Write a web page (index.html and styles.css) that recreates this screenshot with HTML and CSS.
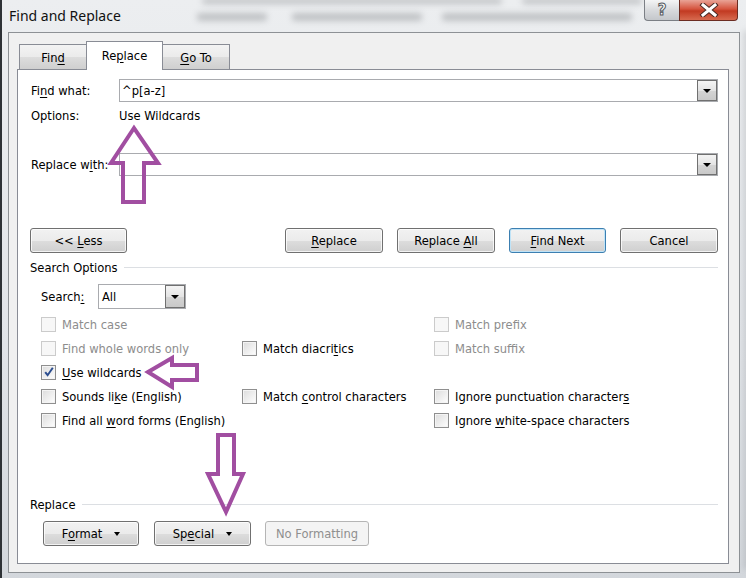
FILE: index.html
```html
<!DOCTYPE html>
<html>
<head>
<meta charset="utf-8">
<link rel="stylesheet" href="styles.css">
</head>
<body>
<div class="window">
  <div class="titlebar">
    <div class="title">Find and Replace</div>
    <div class="behind">
      <i class="smudge s1"></i><i class="smudge s2"></i><i class="smudge s3"></i>
      <i class="smudge s4"></i><i class="smudge s5"></i><i class="smudge s6"></i>
    </div>
    <div class="caption">
      <div class="cap-help">?</div>
      <div class="cap-close">
        <svg width="20" height="14" viewBox="0 0 20 14"><path d="M4 2 L16 12 M16 2 L4 12" stroke="#4a2a24" stroke-width="5" stroke-linecap="square"/><path d="M4 2 L16 12 M16 2 L4 12" stroke="#fff" stroke-width="3" stroke-linecap="square"/></svg>
      </div>
    </div>
  </div>
  <div class="client">
    <div class="tabs">
      <div class="tab"><span>Fin<u>d</u></span></div>
      <div class="tab active"><span>Re<u>p</u>lace</span></div>
      <div class="tab"><span><u>G</u>o To</span></div>
    </div>
    <div class="panel">
      <div class="field-row first">
        <div class="field-label">Fi<u>n</u>d what:</div>
        <div class="combo"><span class="combo-text">^p[a-z]</span><span class="drop"><i class="tri"></i></span></div>
      </div>
      <div class="opt-row">
        <div class="field-label">Options:</div>
        <div>Use Wildcards</div>
      </div>
      <div class="field-row second">
        <div class="field-label">Replace w<u>i</u>th:</div>
        <div class="combo"><span class="combo-text"></span><span class="drop"><i class="tri"></i></span></div>
      </div>
      <div class="btn-row">
        <div class="btn"><span>&lt;&lt; <u>L</u>ess</span></div>
        <div class="btn-group">
          <div class="btn"><span><u>R</u>eplace</span></div>
          <div class="btn"><span>Replace <u>A</u>ll</span></div>
          <div class="btn default"><span><u>F</u>ind Next</span></div>
          <div class="btn"><span>Cancel</span></div>
        </div>
      </div>
      <div class="group-head"><span>Search Options</span><i class="rule"></i></div>
      <div class="search-row">
        <span class="search-label">Search<u>:</u></span>
        <div class="combo small"><span class="combo-text">All</span><span class="drop"><i class="tri"></i></span></div>
      </div>
      <div class="checks">
        <div class="chk disabled"><i class="box"></i><span>Match case</span></div>
        <div class="chk empty"></div>
        <div class="chk disabled"><i class="box"></i><span>Match prefix</span></div>

        <div class="chk disabled"><i class="box"></i><span>Find whole words only</span></div>
        <div class="chk"><i class="box"></i><span>Match diacri<u>t</u>ics</span></div>
        <div class="chk disabled"><i class="box"></i><span>Match suffix</span></div>

        <div class="chk"><i class="box checked"><svg width="12" height="12" viewBox="0 0 12 12"><path d="M2.2 6.2 L4.6 9.2 L9.8 1.8" fill="none" stroke="#2b4d8f" stroke-width="2"/></svg></i><span><u>U</u>se wildcards</span></div>
        <div class="chk empty"></div>
        <div class="chk empty"></div>

        <div class="chk"><i class="box"></i><span>Sounds li<u>k</u>e (English)</span></div>
        <div class="chk"><i class="box"></i><span>Match <u>c</u>ontrol characters</span></div>
        <div class="chk"><i class="box"></i><span>Ignore punctuation character<u>s</u></span></div>

        <div class="chk"><i class="box"></i><span>Find all <u>w</u>ord forms (English)</span></div>
        <div class="chk empty"></div>
        <div class="chk"><i class="box"></i><span>Ignore <u>w</u>hite-space characters</span></div>
      </div>
      <div class="group-head lower"><span>Replace</span><i class="rule"></i></div>
      <div class="btn-row bottom">
        <div class="btn menu"><span>F<u>o</u>rmat</span><i class="tri"></i></div>
        <div class="btn menu"><span>Sp<u>e</u>cial</span><i class="tri"></i></div>
        <div class="btn disabled wide"><span>No Formatting</span></div>
      </div>
      <svg class="arrows" width="746" height="578" viewBox="0 0 746 578">
        <polygon points="135,128 112,163 124,163 124,202 145,202 145,163 159,163" />
        <polygon points="149,372 173,358 173,365 198,365 198,380 173,380 173,387" />
        <polygon points="227,512 209,474 219,474 219,435 235,435 235,474 244,474" />
      </svg>
    </div>
  </div>
</div>
</body>
</html>
```
FILE: styles.css
```css
html, body {
  margin: 0;
  padding: 0;
}
body {
  width: 746px;
  height: 578px;
  overflow: hidden;
  font-family: "DejaVu Sans Condensed", "DejaVu Sans", sans-serif;
  font-size: 12.8px;
  color: #000;
  background: #d9dde2;
}
u { text-decoration: underline; text-underline-offset: 2px; }

.window {
  width: 744px;
  height: 578px;
  border-left: 2px solid #2e3236;
  background: linear-gradient(#eceef0, #e1e4e8 60%, #d3d7dc);
  display: flex;
  flex-direction: column;
  position: relative;
}

/* title bar */
.titlebar {
  height: 32px;
  display: flex;
  align-items: flex-start;
  position: relative;
}
.title {
  font-family: "Noto Sans", "Open Sans", sans-serif;
  font-size: 14px;
  padding: 6px 0 0 7px;
  color: #111;
  white-space: nowrap;
}
.behind {
  position: absolute;
  left: 0;
  top: 0;
  width: 744px;
  height: 32px;
  pointer-events: none;
}
.smudge {
  position: absolute;
  display: block;
  background: #6e7175;
  filter: blur(3px);
  opacity: 0.35;
  border-radius: 3px;
}
.s1 { left: 200px; top: -2px; width: 300px; height: 6px; }
.s2 { left: 520px; top: -2px; width: 120px; height: 6px; }
.s3 { left: 195px; top: 13px; width: 70px; height: 8px; }
.s4 { left: 290px; top: 13px; width: 130px; height: 8px; }
.s5 { left: 440px; top: 13px; width: 190px; height: 8px; }
.s6 { left: 742px; top: 30px; width: 6px; height: 540px; opacity: 0.25; }
.caption {
  margin-left: auto;
  margin-right: 8px;
  display: flex;
  position: relative;
}
.cap-help {
  width: 34px;
  height: 20px;
  border: 1px solid #7b7f85;
  border-top: none;
  border-right: none;
  border-radius: 0 0 0 4px;
  background: linear-gradient(#f4f5f6, #d8dadd 50%, #c4c7cb);
  text-align: center;
  font-family: "DejaVu Sans", sans-serif;
  font-size: 15px;
  font-weight: bold;
  line-height: 20px;
  color: #fff;
  -webkit-text-stroke: 1px #565b62;
}
.cap-close {
  width: 57px;
  height: 20px;
  border: 1px solid #6b2c22;
  border-top: none;
  border-radius: 0 0 4px 0;
  background: linear-gradient(#e9a396, #d5543e 45%, #c23a22 55%, #d76a4f);
  display: flex;
  align-items: center;
  justify-content: center;
}

/* client area */
.client {
  margin: 0 0 5px 6px;
  width: 732px;
  box-sizing: border-box;
  flex: 1;
  background: #f0f0f0;
  border: 1px solid #8d9195;
  padding: 8px 10px 8px 8px;
  display: flex;
  flex-direction: column;
}
.tabs {
  height: 28px;
  display: flex;
  align-items: flex-end;
  padding-left: 2px;
  position: relative;
  z-index: 2;
}
.tab {
  height: 25px;
  box-sizing: border-box;
  border: 1px solid #898c95;
  border-bottom: none;
  background: linear-gradient(#f3f3f3, #ebebeb 50%, #dddddd 51%, #cfcfcf);
  display: flex;
  align-items: center;
  justify-content: center;
  width: 68px;
  margin-right: -1px;
  padding-top: 1px;
}
.tab.active {
  height: 29px;
  width: 77px;
  margin-bottom: -1px;
  background: #fff;
  padding-top: 0;
  padding-bottom: 2px;
  position: relative;
  z-index: 3;
}

.panel {
  flex: 1;
  background: #fff;
  border: 1px solid #898c95;
  position: relative;
  padding: 0 10px 0 12px;
}

.field-row {
  display: flex;
  align-items: center;
  height: 23px;
  padding-left: 1px;
}
.field-row.first { margin-top: 9px; }
.field-row.second { margin-top: 30px; }
.field-label { width: 88px; }
.combo {
  flex: 1;
  height: 23px;
  box-sizing: border-box;
  border: 1px solid #a9abaf;
  display: flex;
  align-items: stretch;
  background: #fff;
}
.combo-text { flex: 1; padding: 3px 0 0 2px; }
.drop {
  width: 20px;
  box-sizing: border-box;
  border: 1px solid #707070;
  background: linear-gradient(#f4f4f4, #e4e4e4 50%, #d4d4d4 51%, #c9c9c9);
  display: flex;
  align-items: center;
  justify-content: center;
}
.tri {
  display: inline-block;
  width: 0;
  height: 0;
  border-left: 4px solid transparent;
  border-right: 4px solid transparent;
  border-top: 4px solid #000;
}
.opt-row {
  display: flex;
  height: 16px;
  align-items: center;
  margin-top: 5px;
  padding-left: 1px;
}

.btn-row {
  display: flex;
  margin-top: 52px;
  height: 25px;
}
.btn-group {
  margin-left: auto;
  display: flex;
  gap: 14px;
}
.btn {
  width: 98px;
  height: 25px;
  box-sizing: border-box;
  border: 1px solid #707070;
  border-radius: 3px;
  background: linear-gradient(#f2f2f2, #ebebeb 50%, #dddddd 51%, #cfcfcf);
  display: flex;
  align-items: center;
  justify-content: center;
  box-shadow: inset 0 0 0 1px rgba(255,255,255,0.75);
  white-space: nowrap;
}
.btn:first-child { width: 97px; }
.btn-group .btn:first-child { width: 98px; }
.btn.default {
  border-color: #3c7fb1;
  width: 97px;
  box-shadow: inset 0 0 0 1px #bfe3f7;
}
.group-head {
  display: flex;
  align-items: center;
  height: 16px;
  margin-top: 6px;
}
.group-head .rule {
  flex: 1;
  height: 1px;
  background: #dcdfe3;
  margin-left: 6px;
}
.group-head.lower { margin-top: 64px; }

.search-row {
  display: flex;
  align-items: center;
  margin-top: 9px;
  padding-left: 11px;
  height: 25px;
}
.search-label { width: 57px; }
.combo.small {
  flex: none;
  width: 88px;
  height: 25px;
}
.combo.small .combo-text { padding: 4px 0 0 3px; }

.checks {
  display: grid;
  grid-template-columns: 201px 192px 1fr;
  grid-auto-rows: 24px;
  margin-top: 3px;
  padding-left: 11px;
}
.chk {
  display: flex;
  align-items: center;
  white-space: nowrap;
}
.chk .box {
  width: 15px;
  height: 15px;
  box-sizing: border-box;
  border: 1px solid #8f8f8f;
  background: linear-gradient(135deg, #dcdcdc, #f4f4f4 70%, #fff);
  box-shadow: inset 0 0 0 1px #f4f4f4;
  margin-right: 6px;
  display: flex;
  align-items: center;
  justify-content: center;
}
.chk.disabled { color: #8d8d8d; }
.chk.disabled .box {
  border-color: #cbcbcb;
  background: #f7f7f7;
  box-shadow: none;
}
.chk .box.checked svg { display: block; }

.btn-row.bottom {
  margin-top: 9px;
  padding-left: 13px;
  gap: 15px;
}
.btn.menu { width: 97px; }
.btn.menu:first-child { width: 96px; }
.btn.menu .tri { border-width: 4px 3.5px 0 3.5px; margin-left: 12px; }
.btn.disabled {
  color: #8f8f8f;
  border-color: #b5b5b5;
  background: #f4f4f4;
  box-shadow: none;
  margin-left: -1px;
}
.btn.wide { width: 104px; }

.arrows {
  position: absolute;
  left: -19px;
  top: -70px;
  pointer-events: none;
}
.arrows polygon {
  fill: none;
  stroke: #a14ea1;
  stroke-width: 4;
  stroke-linejoin: miter;
}
```
